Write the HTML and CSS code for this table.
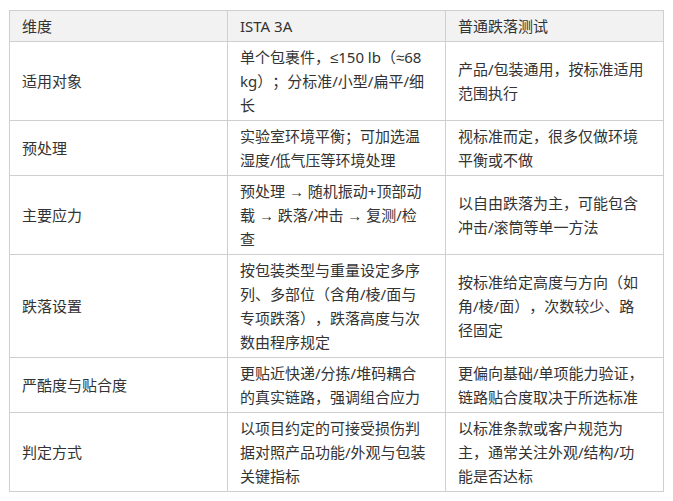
FILE: index.html
```html
<!DOCTYPE html>
<html lang="zh-CN">
<head>
<meta charset="utf-8">
<title>ISTA 3A 与普通跌落测试对比</title>
<link rel="stylesheet" href="styles.css">
</head>
<body>
<table class="compare">
  <colgroup><col class="c"><col class="c"><col class="c"></colgroup>
  <thead>
    <tr><th>维度</th><th>ISTA 3A</th><th>普通跌落测试</th></tr>
  </thead>
  <tbody>
    <tr><td>适用对象</td><td>单个包裹件，≤150 lb（≈68 kg）；分标准/小型/扁平/细长</td><td>产品/包装通用，按标准适用范围执行</td></tr>
    <tr><td>预处理</td><td>实验室环境平衡；可加选温湿度/低气压等环境处理</td><td>视标准而定，很多仅做环境平衡或不做</td></tr>
    <tr><td>主要应力</td><td>预处理 → 随机振动+顶部动载 → 跌落/冲击 → 复测/检查</td><td>以自由跌落为主，可能包含冲击/滚筒等单一方法</td></tr>
    <tr><td>跌落设置</td><td>按包装类型与重量设定多序列、多部位（含角/棱/面与专项跌落），跌落高度与次数由程序规定</td><td>按标准给定高度与方向（如角/棱/面），次数较少、路径固定</td></tr>
    <tr><td>严酷度与贴合度</td><td>更贴近快递/分拣/堆码耦合的真实链路，强调组合应力</td><td>更偏向基础/单项能力验证，链路贴合度取决于所选标准</td></tr>
    <tr><td>判定方式</td><td>以项目约定的可接受损伤判据对照产品功能/外观与包装关键指标</td><td>以标准条款或客户规范为主，通常关注外观/结构/功能是否达标</td></tr>
  </tbody>
</table>
</body>
</html>
```
FILE: styles.css
```css
html, body {
  margin: 0;
  padding: 0;
  background: #ffffff;
}
body {
  padding: 10px 10px 10px 9px;
  font-family: "Noto Sans", "Liberation Sans", "Noto Sans CJK SC", sans-serif;
  font-size: 15px;
  line-height: 24px;
  color: #333333;
  text-spacing-trim: space-all;
}
.compare {
  width: 654px;
  border-collapse: collapse;
  table-layout: fixed;
}
.compare .c {
  width: 218px;
}
.compare th,
.compare td {
  border: 1px solid #cfcfcf;
  padding: 3px 17px 3px 12px;
  text-align: left;
  vertical-align: middle;
  font-weight: normal;
}
.compare th {
  background: #f2f2f2;
}
```
